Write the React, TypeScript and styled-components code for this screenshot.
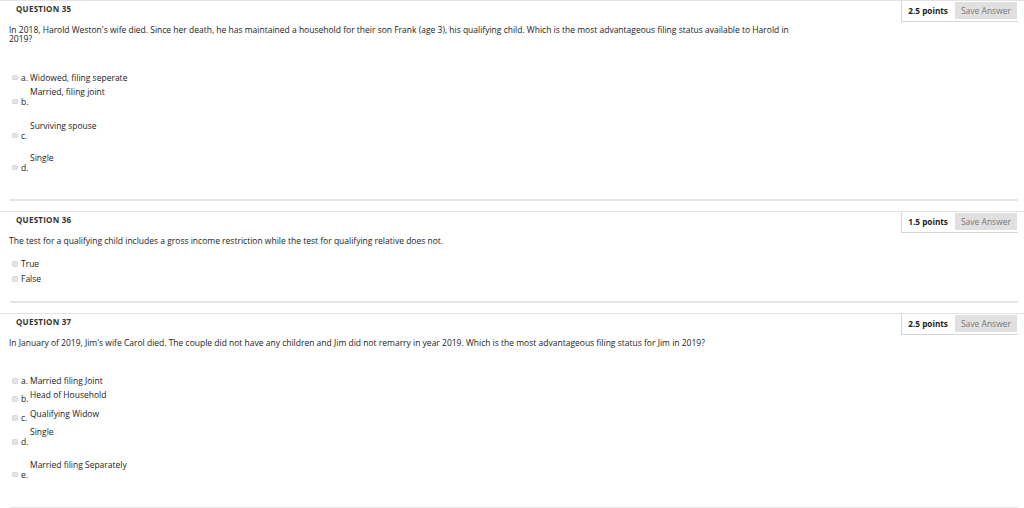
import React from "react";
import styled, { createGlobalStyle } from "styled-components";

const Global = createGlobalStyle`
  html, body { margin: 0; padding: 0; background: #fff; }
  body { font-family: "Open Sans", "Liberation Sans", sans-serif; color: #222; }
`;

const Page = styled.div`
  display: flex;
  flex-direction: column;
  width: 1024px;
`;

const Question = styled.section`
  display: flex;
  flex-direction: column;
  & + & { margin-top: 10px; }
`;

const Header = styled.div`
  display: flex;
  justify-content: space-between;
  align-items: flex-start;
  height: 22px;
  border-top: 1px solid #e2e2e2;
  box-sizing: border-box;
`;

const Title = styled.h3`
  margin: 3px 0 0 16px;
  font-size: 8px;
  line-height: 10px;
  font-weight: 700;
  letter-spacing: 0.25px;
  color: #333;
`;

const PointsBox = styled.div`
  display: flex;
  align-items: center;
  gap: 7px;
  height: 21px;
  box-sizing: border-box;
  margin-right: 6px;
  padding: 1px 1px 2px 6px;
  border-left: 1px solid #d6d6d6;
  border-bottom: 1px solid #d6d6d6;
`;

const Points = styled.span`
  font-size: 8.2px;
  font-weight: 700;
  color: #222;
`;

const SaveButton = styled.button`
  height: 17px;
  padding: 0 6px;
  border: none;
  background: #e0e0e0;
  color: #777;
  font-family: inherit;
  font-size: 8.5px;
`;

const QuestionText = styled.p`
  margin: 3px 0 0 9px;
  max-width: 790px;
  font-size: 8.5px;
  line-height: 9px;
`;

const Options = styled.div<{ $top: number; $bottom: number }>`
  display: flex;
  flex-direction: column;
  margin-top: ${(p) => p.$top}px;
  margin-bottom: ${(p) => p.$bottom}px;
  padding-left: 12px;
`;

const Row = styled.div<{ $gap: number }>`
  display: flex;
  align-items: flex-start;
  margin-top: ${(p) => p.$gap}px;
  font-size: 8.5px;
  line-height: 10px;
`;

const Marker = styled.span<{ $drop: number }>`
  display: flex;
  align-items: center;
  margin-top: ${(p) => p.$drop}px;
  height: 10px;
`;

const Radio = styled.span`
  width: 5.5px;
  height: 5.5px;
  border-radius: 50%;
  background: #e6e6e6;
  box-shadow: inset 0 0 0 0.6px #cccccc;
  margin-right: 3.5px;
`;

const Letter = styled.span`
  width: 9px;
`;

const OptionText = styled.span`
  white-space: nowrap;
`;

const Separator = styled.div`
  height: 2px;
  margin: 0 6px 0 10px;
  background: #e4e4e4;
`;

type Opt = { letter?: string; text: string; drop: number; gap: number };

type Q = {
  num: number;
  points: string;
  text: string;
  optTop: number;
  optBottom: number;
  opts: Opt[];
};

const questions: Q[] = [
  {
    num: 35,
    points: "2.5",
    text:
      "In 2018, Harold Weston's wife died. Since her death, he has maintained a household for their son Frank (age 3), his qualifying child. Which is the most advantageous filing status available to Harold in 2019?",
    optTop: 29.5,
    optBottom: 26,
    opts: [
      { letter: "a.", text: "Widowed, filing seperate", drop: 0, gap: 0 },
      { letter: "b.", text: "Married, filing joint", drop: 10, gap: 4 },
      { letter: "c.", text: "Surviving spouse", drop: 10, gap: 14 },
      { letter: "d.", text: "Single", drop: 10, gap: 12 },
    ],
  },
  {
    num: 36,
    points: "1.5",
    text:
      "The test for a qualifying child includes a gross income restriction while the test for qualifying relative does not.",
    optTop: 14.5,
    optBottom: 17,
    opts: [
      { text: "True", drop: 0, gap: 0 },
      { text: "False", drop: 0, gap: 5 },
    ],
  },
  {
    num: 37,
    points: "2.5",
    text:
      "In January of 2019, Jim's wife Carol died. The couple did not have any children and Jim did not remarry in year 2019. Which is the most advantageous filing status for Jim in 2019?",
    optTop: 29,
    optBottom: 27,
    opts: [
      { letter: "a.", text: "Married filing Joint", drop: 0, gap: 0 },
      { letter: "b.", text: "Head of Household", drop: 4, gap: 4 },
      { letter: "c.", text: "Qualifying Widow", drop: 4, gap: 5 },
      { letter: "d.", text: "Single", drop: 10, gap: 4 },
      { letter: "e.", text: "Married filing Separately", drop: 10, gap: 12.5 },
    ],
  },
];

export default function App() {
  return (
    <Page>
      <Global />
      {questions.map((q) => (
        <Question key={q.num}>
          <Header>
            <Title>QUESTION {q.num}</Title>
            <PointsBox>
              <Points>{q.points} points</Points>
              <SaveButton>Save Answer</SaveButton>
            </PointsBox>
          </Header>
          <QuestionText>{q.text}</QuestionText>
          <Options $top={q.optTop} $bottom={q.optBottom}>
            {q.opts.map((o, i) => (
              <Row key={i} $gap={o.gap}>
                <Marker $drop={o.drop}>
                  <Radio />
                  {o.letter && <Letter>{o.letter}</Letter>}
                </Marker>
                <OptionText>{o.text}</OptionText>
              </Row>
            ))}
          </Options>
          <Separator />
        </Question>
      ))}
    </Page>
  );
}
